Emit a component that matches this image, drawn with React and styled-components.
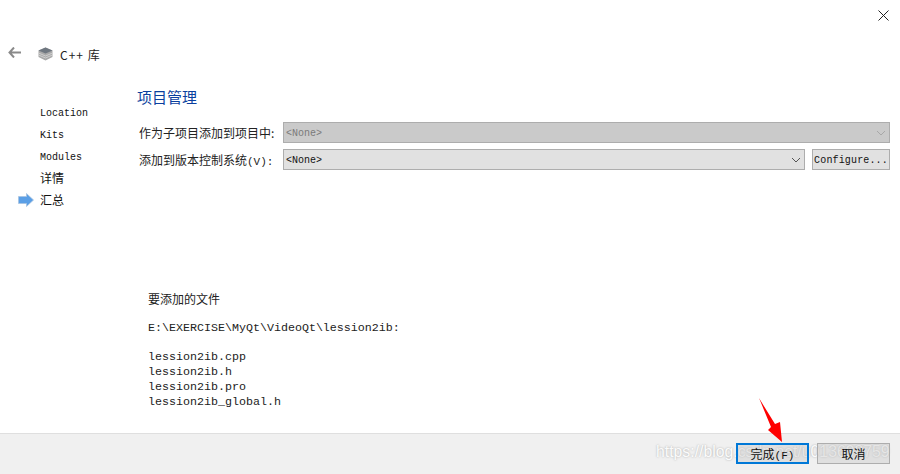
import React from 'react';
import styled, { createGlobalStyle } from "styled-components";

const CJK = `"Noto Sans CJK SC", "Liberation Sans", sans-serif`;
const MONO = `"Liberation Mono", "Noto Sans CJK SC", monospace`;

const steps = [
	{ label: "Location", mono: true },
	{ label: "Kits", mono: true },
	{ label: "Modules", mono: true },
	{ label: "详情" },
	{ label: "汇总", current: true },
];

const files = ["lession2ib.cpp", "lession2ib.h", "lession2ib.pro", "lession2ib_global.h"];

function App(){
	return(
		<Wizard>
			<GlobalStyle/>
			<CloseRow>
				<CloseIcon viewBox="0 0 11 11">
					<path d="M0.5 0.5L10.5 10.5M10.5 0.5L0.5 10.5" stroke="#222" strokeWidth="1" fill="none"/>
				</CloseIcon>
			</CloseRow>
			<TitleRow>
				<BackIcon viewBox="0 0 13 11">
					<path d="M6 0.5L1.5 5.5L6 10.5M1.5 5.5H13" stroke="#8a8a8a" strokeWidth="2" fill="none"/>
				</BackIcon>
				<LibIcon viewBox="0 0 15 14">
					<path d="M7.5 0.5L14.5 3.5V10L7.5 13.5L0.5 10V3.5Z" fill="#a9a9a9"/>
					<path d="M7.5 0.5L14.5 3.5L7.5 6.5L0.5 3.5Z" fill="#6f7780"/>
					<path d="M0.5 6L7.5 9L14.5 6M0.5 8L7.5 11L14.5 8" stroke="#d8d8d8" strokeWidth="0.8" fill="none"/>
				</LibIcon>
				<WizardTitle>C++ 库</WizardTitle>
			</TitleRow>
			<Body>
				<Sidebar>
					{steps.map((step) => (
						<Step key={step.label} mono={step.mono}>
							{step.current && (
								<StepArrow viewBox="0 0 16 14">
									<path d="M0.5 3.5H8.5V0.5L15.5 7L8.5 13.5V10.5H0.5Z" fill="#5b9fe6" stroke="#a9c4e0" strokeWidth="0.8"/>
								</StepArrow>
							)}
							{step.label}
						</Step>
					))}
				</Sidebar>
				<Content>
					<Heading>项目管理</Heading>
					<FormRow>
						<FormLabel>作为子项目添加到项目中:</FormLabel>
						<Combo disabled>
							&lt;None&gt;
							<Chevron disabled/>
						</Combo>
					</FormRow>
					<FormRow>
						<FormLabel>添加到版本控制系统<Latin>(V):</Latin></FormLabel>
						<Combo>
							&lt;None&gt;
							<Chevron/>
						</Combo>
						<ConfigButton>Configure...</ConfigButton>
					</FormRow>
					<Summary>
						<SummaryTitle>要添加的文件</SummaryTitle>
						<Path>E:\EXERCISE\MyQt\VideoQt\lession2ib:</Path>
						<FileList>
							{files.map((f) => <div key={f}>{f}</div>)}
						</FileList>
					</Summary>
				</Content>
			</Body>
			<Footer>
				<Watermark>https://blog.csdn.net/u013698759</Watermark>
				<FooterButton primary>完成<Latin>(F)</Latin></FooterButton>
				<FooterButton>取消</FooterButton>
				<RedArrow viewBox="0 0 26 46">
					<path d="M1 1L17 27L22 25L24 45L10 33L13 30Z" fill="#fe0000"/>
				</RedArrow>
			</Footer>
		</Wizard>
	);
}

const Chevron = ({ disabled }) => (
	<ChevronIcon viewBox="0 0 10 6">
		<path d="M1 1L5 5L9 1" stroke={disabled ? "#a8a8a8" : "#555"} strokeWidth="1" fill="none"/>
	</ChevronIcon>
);

const GlobalStyle = createGlobalStyle`
	html, body{
		margin: 0;
		padding: 0;
		background: #fff;
	}
`;

const Wizard = styled.div`
	width: 900px;
	height: 474px;
	display: flex;
	flex-direction: column;
	overflow: hidden;
	background: #fff;
	color: #111;
	font-family: ${CJK};
`;

const CloseRow = styled.div`
	height: 31px;
	padding: 10px 11px 0 0;
	box-sizing: border-box;
	display: flex;
	justify-content: flex-end;
	flex: none;
`;

const CloseIcon = styled.svg`
	width: 11px;
	height: 11px;
`;

const TitleRow = styled.div`
	height: 46px;
	padding-left: 8px;
	box-sizing: border-box;
	display: flex;
	align-items: flex-start;
	flex: none;
`;

const BackIcon = styled.svg`
	width: 13px;
	height: 11px;
	margin-top: 16px;
`;

const LibIcon = styled.svg`
	width: 15px;
	height: 14px;
	margin: 16px 0 0 17px;
`;

const WizardTitle = styled.div`
	margin-left: 7px;
	margin-top: 15px;
	font-size: 12px;
	line-height: 17px;
	letter-spacing: 1px;
	color: #222;
`;

const Body = styled.div`
	flex: 1;
	display: flex;
	min-height: 0;
`;

const Sidebar = styled.div`
	width: 137px;
	padding: 24px 0 0 40px;
	box-sizing: border-box;
	flex: none;
`;

const Step = styled.div`
	position: relative;
	height: 22px;
	line-height: ${({mono}) => (mono ? "26px" : "22px")};
	font-size: ${({mono}) => (mono ? "10px" : "12px")};
	font-family: ${({mono}) => (mono ? MONO : CJK)};
	color: #111;
`;

const StepArrow = styled.svg`
	position: absolute;
	left: -22px;
	top: 4px;
	width: 16px;
	height: 14px;
`;

const Content = styled.div`
	flex: 1;
	min-width: 0;
	padding-right: 10px;
`;

const Heading = styled.div`
	height: 45px;
	padding-top: 10px;
	box-sizing: border-box;
	font-size: 15px;
	line-height: 20px;
	color: #0b3f9e;
`;

const FormRow = styled.div`
	display: flex;
	align-items: center;
	height: 21px;
	margin-bottom: 6px;
`;

const FormLabel = styled.div`
	width: 146px;
	padding-left: 2px;
	box-sizing: border-box;
	font-size: 12px;
	color: #222;
	white-space: nowrap;
	flex: none;
`;

const Latin = styled.span`
	font-family: ${MONO};
	font-size: 11px;
`;

const Combo = styled.div`
	flex: 1;
	height: 21px;
	box-sizing: border-box;
	display: flex;
	align-items: center;
	justify-content: space-between;
	padding: 2px 3px 0 2px;
	font-family: ${MONO};
	font-size: 10px;
	border: 1px solid #adadad;
	background: ${({disabled}) => (disabled ? "#cacaca" : "#e1e1e1")};
	color: ${({disabled}) => (disabled ? "#7a7a7a" : "#111")};
`;

const ChevronIcon = styled.svg`
	width: 10px;
	height: 6px;
	margin-top: -2px;
`;

const ConfigButton = styled.div`
	width: 78px;
	height: 21px;
	margin-left: 7px;
	box-sizing: border-box;
	border: 1px solid #adadad;
	background: #e1e1e1;
	text-align: center;
	line-height: 21px;
	font-family: ${MONO};
	font-size: 10px;
	letter-spacing: 0.15px;
	flex: none;
`;

const Summary = styled.div`
	margin-top: 120px;
	padding-left: 11px;
`;

const SummaryTitle = styled.div`
	font-size: 12px;
	line-height: 17px;
	color: #222;
`;

const Path = styled.div`
	margin-top: 14px;
	font-family: ${MONO};
	font-size: 11.67px;
	line-height: 15px;
	color: #222;
`;

const FileList = styled.div`
	margin-top: 14px;
	font-family: ${MONO};
	font-size: 11.67px;
	line-height: 15px;
	color: #222;
`;

const Footer = styled.div`
	position: relative;
	height: 41px;
	flex: none;
	box-sizing: border-box;
	border-top: 1px solid #dfdfdf;
	background: #f0f0f0;
	display: flex;
	justify-content: flex-end;
	align-items: flex-start;
	gap: 8px;
	padding: 9px 10px 0 0;
`;

const FooterButton = styled.div`
	position: relative;
	width: 73px;
	height: 21px;
	box-sizing: border-box;
	border: ${({primary}) => (primary ? "2px solid #0078d7" : "1px solid #adadad")};
	background: rgba(200, 200, 200, 0.42);
	text-align: center;
	line-height: ${({primary}) => (primary ? "17px" : "19px")};
	font-size: 12px;
	color: #111;
`;

const Watermark = styled.div`
	position: absolute;
	left: 656px;
	top: 6px;
	font-family: "Liberation Sans", sans-serif;
	font-size: 15.8px;
	line-height: 24px;
	white-space: nowrap;
	color: rgba(255, 255, 255, 0.95);
	text-shadow: 0 0 2px rgba(120, 120, 120, 0.6);
`;

const RedArrow = styled.svg`
	position: absolute;
	left: 758px;
	top: -37px;
	width: 26px;
	height: 46px;
`;

export default App;
